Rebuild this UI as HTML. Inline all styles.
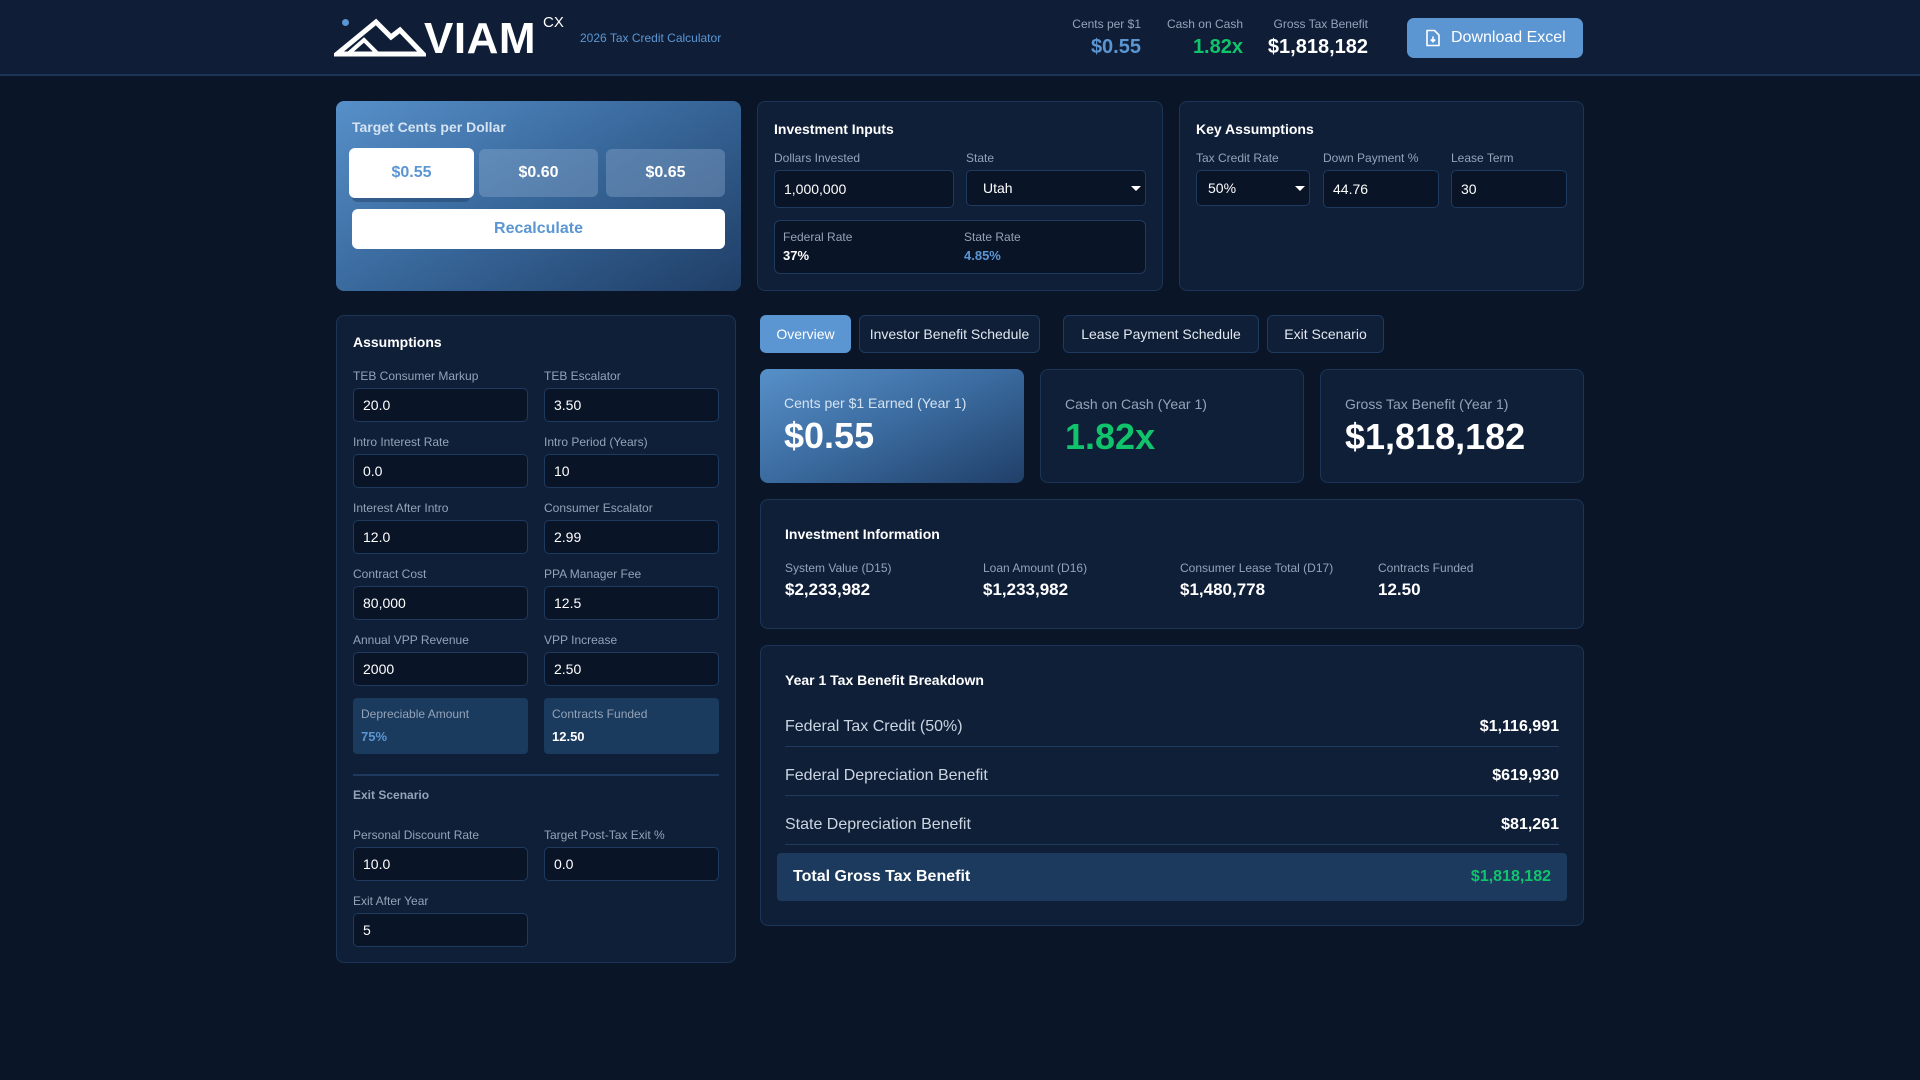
<!DOCTYPE html>
<html><head><meta charset="utf-8"><style>
*{box-sizing:border-box;margin:0;padding:0}
body{width:1920px;height:1080px;background:#0a1628;font-family:"Liberation Sans",sans-serif;position:relative;overflow:hidden;color:#fff}
.a{position:absolute}
.hdr{left:0;top:0;width:1920px;height:76px;background:#0f1e36;border-bottom:2px solid #1b3558}
.card{position:absolute;background:#0f1f38;border:1.5px solid #1c3557;border-radius:8px}
.lbl{position:absolute;font-size:12px;color:#94a3b8;white-space:nowrap}
.inp{position:absolute;background:#0a1427;border:1.5px solid #1e3a5f;border-radius:5px;font-size:14px;color:#fff;padding-left:9px;display:flex;align-items:center}
.ttl{position:absolute;font-size:14px;font-weight:bold;color:#fff}
.tab{position:absolute;top:315px;height:38px;border:1.5px solid #1e3a5f;border-radius:6px;background:#0f1f38;color:#e2e8f0;font-size:14px;display:flex;align-items:center;justify-content:center}
.caret{position:absolute;right:4px;top:50%;margin-top:-2px;border-left:5px solid transparent;border-right:5px solid transparent;border-top:5px solid #fff}
.row{position:absolute;left:784px;width:775px;height:49px;padding-top:10px;border-bottom:1.5px solid #1e3a5f;display:flex;justify-content:space-between;align-items:center;font-size:16px;color:#cbd5e1}
.row b{color:#fff;font-size:16px}
</style></head><body>
<div class="a hdr"></div>
<div class="a" style="left:342px;top:19px;width:7px;height:7px;border-radius:50%;background:#5b96d3"></div>
<svg class="a" style="left:334px;top:18px" width="92" height="40" viewBox="0 0 92 40">
<path d="M3 36 L42 4 L57 19 L66 12 L89 36 Z" fill="none" stroke="#fff" stroke-width="5" stroke-linejoin="miter"/>
<path d="M14 36 L30 22 L44 36" fill="none" stroke="#fff" stroke-width="4"/>
</svg>
<div class="a" style="left:424px;top:14px;font-size:44px;font-weight:bold;letter-spacing:0.5px;color:#fff">VIAM</div>
<div class="a" style="left:543px;top:14px;font-size:15px;color:#fff">CX</div>
<div class="a" style="left:580px;top:31px;font-size:12px;color:#5b96d3">2026 Tax Credit Calculator</div>
<div class="a" style="left:1060px;top:17px;width:81px;text-align:right;font-size:12px;color:#94a3b8">Cents per $1</div>
<div class="a" style="left:1060px;top:36px;width:81px;text-align:right;font-size:20px;font-weight:bold;color:#5b96d3">$0.55</div>
<div class="a" style="left:1150px;top:17px;width:93px;text-align:right;font-size:12px;color:#94a3b8">Cash on Cash</div>
<div class="a" style="left:1150px;top:36px;width:93px;text-align:right;font-size:20px;font-weight:bold;color:#10c46b">1.82x</div>
<div class="a" style="left:1250px;top:17px;width:118px;text-align:right;font-size:12px;color:#94a3b8">Gross Tax Benefit</div>
<div class="a" style="left:1250px;top:36px;width:118px;text-align:right;font-size:20px;font-weight:bold;color:#fff">$1,818,182</div>
<div class="a" style="left:1407px;top:18px;width:176px;height:40px;background:#5b96d3;border-radius:7px;display:flex;align-items:center;padding-left:18px;font-size:16px;color:#fff">
<svg width="16" height="18" viewBox="0 0 16 18" style="margin-right:10px"><path d="M2 1.5 H9.5 L14 6 V16.5 H2 Z" fill="none" stroke="#fff" stroke-width="1.6" stroke-linejoin="round"/><path d="M8 7.5 V12.5 M5.8 10.5 L8 12.7 L10.2 10.5" fill="none" stroke="#fff" stroke-width="1.6"/></svg>Download Excel</div>

<div class="a" style="left:336px;top:101px;width:405px;height:190px;border-radius:8px;background:linear-gradient(150deg,#5790c9 0%,#3a6a9e 45%,#1f3e66 100%)"></div>
<div class="a" style="left:352px;top:119px;font-size:14px;font-weight:bold;color:#d5e3f3">Target Cents per Dollar</div>
<div class="a" style="left:352px;top:152px;width:118px;height:50px;border-radius:5px;background:rgba(30,60,100,.45)"></div>
<div class="a" style="left:349px;top:148px;width:125px;height:50px;border-radius:6px;background:#fff;display:flex;align-items:center;justify-content:center;font-size:16px;font-weight:bold;color:#5b96d3">$0.55</div>
<div class="a" style="left:479px;top:149px;width:119px;height:48px;border-radius:6px;background:rgba(140,170,205,.4);display:flex;align-items:center;justify-content:center;font-size:16px;font-weight:bold;color:#fff">$0.60</div>
<div class="a" style="left:606px;top:149px;width:119px;height:48px;border-radius:6px;background:rgba(140,170,205,.4);display:flex;align-items:center;justify-content:center;font-size:16px;font-weight:bold;color:#fff">$0.65</div>
<div class="a" style="left:352px;top:209px;width:373px;height:40px;border-radius:6px;background:#fff;display:flex;align-items:center;justify-content:center;font-size:16px;font-weight:bold;color:#5b96d3">Recalculate</div>

<div class="card" style="left:757px;top:101px;width:406px;height:190px"></div>
<div class="ttl" style="left:774px;top:121px">Investment Inputs</div>
<div class="lbl" style="left:774px;top:151px">Dollars Invested</div>
<div class="lbl" style="left:966px;top:151px">State</div>
<div class="inp" style="left:774px;top:170px;width:180px;height:38px">1,000,000</div>
<div class="inp" style="left:966px;top:170px;width:180px;height:36px;padding-left:16px">Utah<span class="caret"></span></div>
<div class="a" style="left:774px;top:220px;width:372px;height:54px;background:#0a1427;border:1.5px solid #1e3a5f;border-radius:6px"></div>
<div class="lbl" style="left:783px;top:230px">Federal Rate</div>
<div class="a" style="left:783px;top:248px;font-size:13px;font-weight:bold;color:#fff">37%</div>
<div class="lbl" style="left:964px;top:230px">State Rate</div>
<div class="a" style="left:964px;top:248px;font-size:13px;font-weight:bold;color:#5b96d3">4.85%</div>

<div class="card" style="left:1179px;top:101px;width:405px;height:190px"></div>
<div class="ttl" style="left:1196px;top:121px">Key Assumptions</div>
<div class="lbl" style="left:1196px;top:151px">Tax Credit Rate</div>
<div class="lbl" style="left:1323px;top:151px">Down Payment %</div>
<div class="lbl" style="left:1451px;top:151px">Lease Term</div>
<div class="inp" style="left:1196px;top:170px;width:114px;height:36px;padding-left:11px">50%<span class="caret"></span></div>
<div class="inp" style="left:1323px;top:170px;width:116px;height:38px">44.76</div>
<div class="inp" style="left:1451px;top:170px;width:116px;height:38px">30</div>

<div class="card" style="left:336px;top:315px;width:400px;height:648px"></div>
<div class="ttl" style="left:353px;top:334px">Assumptions</div>
<div class="lbl" style="left:353px;top:369px">TEB Consumer Markup</div><div class="lbl" style="left:544px;top:369px">TEB Escalator</div>
<div class="inp" style="left:353px;top:388px;width:175px;height:34px">20.0</div><div class="inp" style="left:544px;top:388px;width:175px;height:34px">3.50</div>
<div class="lbl" style="left:353px;top:435px">Intro Interest Rate</div><div class="lbl" style="left:544px;top:435px">Intro Period (Years)</div>
<div class="inp" style="left:353px;top:454px;width:175px;height:34px">0.0</div><div class="inp" style="left:544px;top:454px;width:175px;height:34px">10</div>
<div class="lbl" style="left:353px;top:501px">Interest After Intro</div><div class="lbl" style="left:544px;top:501px">Consumer Escalator</div>
<div class="inp" style="left:353px;top:520px;width:175px;height:34px">12.0</div><div class="inp" style="left:544px;top:520px;width:175px;height:34px">2.99</div>
<div class="lbl" style="left:353px;top:567px">Contract Cost</div><div class="lbl" style="left:544px;top:567px">PPA Manager Fee</div>
<div class="inp" style="left:353px;top:586px;width:175px;height:34px">80,000</div><div class="inp" style="left:544px;top:586px;width:175px;height:34px">12.5</div>
<div class="lbl" style="left:353px;top:633px">Annual VPP Revenue</div><div class="lbl" style="left:544px;top:633px">VPP Increase</div>
<div class="inp" style="left:353px;top:652px;width:175px;height:34px">2000</div><div class="inp" style="left:544px;top:652px;width:175px;height:34px">2.50</div>
<div class="a" style="left:353px;top:698px;width:175px;height:56px;background:#1a3a5e;border-radius:4px"></div>
<div class="a" style="left:544px;top:698px;width:175px;height:56px;background:#1a3a5e;border-radius:4px"></div>
<div class="lbl" style="left:361px;top:707px">Depreciable Amount</div><div class="lbl" style="left:552px;top:707px">Contracts Funded</div>
<div class="a" style="left:361px;top:729px;font-size:13px;font-weight:bold;color:#5b96d3">75%</div>
<div class="a" style="left:552px;top:729px;font-size:13px;font-weight:bold;color:#fff">12.50</div>
<div class="a" style="left:353px;top:774px;width:366px;height:1.5px;background:#1e3a5f"></div>
<div class="a" style="left:353px;top:788px;font-size:12px;font-weight:bold;color:#94a3b8">Exit Scenario</div>
<div class="lbl" style="left:353px;top:828px">Personal Discount Rate</div><div class="lbl" style="left:544px;top:828px">Target Post-Tax Exit %</div>
<div class="inp" style="left:353px;top:847px;width:175px;height:34px">10.0</div><div class="inp" style="left:544px;top:847px;width:175px;height:34px">0.0</div>
<div class="lbl" style="left:353px;top:894px">Exit After Year</div>
<div class="inp" style="left:353px;top:913px;width:175px;height:34px">5</div>

<div class="tab" style="left:760px;width:91px;background:#5b96d3;border-color:#5b96d3;color:#fff">Overview</div>
<div class="tab" style="left:859px;width:181px">Investor Benefit Schedule</div>
<div class="tab" style="left:1063px;width:196px">Lease Payment Schedule</div>
<div class="tab" style="left:1267px;width:117px">Exit Scenario</div>

<div class="a" style="left:760px;top:369px;width:264px;height:114px;border-radius:8px;background:linear-gradient(155deg,#5790c9 0%,#3a6a9e 50%,#203f68 100%)"></div>
<div class="a" style="left:784px;top:395px;font-size:14px;color:#d5e3f3">Cents per $1 Earned (Year 1)</div>
<div class="a" style="left:784px;top:415px;font-size:36px;font-weight:bold;color:#fff">$0.55</div>
<div class="card" style="left:1040px;top:369px;width:264px;height:114px"></div>
<div class="a" style="left:1065px;top:396px;font-size:14px;color:#94a3b8">Cash on Cash (Year 1)</div>
<div class="a" style="left:1065px;top:416px;font-size:36px;font-weight:bold;color:#10c46b">1.82x</div>
<div class="card" style="left:1320px;top:369px;width:264px;height:114px"></div>
<div class="a" style="left:1345px;top:396px;font-size:14px;color:#94a3b8">Gross Tax Benefit (Year 1)</div>
<div class="a" style="left:1345px;top:416px;font-size:36px;font-weight:bold;color:#fff">$1,818,182</div>

<div class="card" style="left:760px;top:499px;width:824px;height:130px"></div>
<div class="ttl" style="left:785px;top:526px">Investment Information</div>
<div class="lbl" style="left:785px;top:561px">System Value (D15)</div><div class="a" style="left:785px;top:580px;font-size:17px;font-weight:bold">$2,233,982</div>
<div class="lbl" style="left:983px;top:561px">Loan Amount (D16)</div><div class="a" style="left:983px;top:580px;font-size:17px;font-weight:bold">$1,233,982</div>
<div class="lbl" style="left:1180px;top:561px">Consumer Lease Total (D17)</div><div class="a" style="left:1180px;top:580px;font-size:17px;font-weight:bold">$1,480,778</div>
<div class="lbl" style="left:1378px;top:561px">Contracts Funded</div><div class="a" style="left:1378px;top:580px;font-size:17px;font-weight:bold">12.50</div>

<div class="card" style="left:760px;top:645px;width:824px;height:281px"></div>
<div class="ttl" style="left:785px;top:672px">Year 1 Tax Benefit Breakdown</div>
<div class="row" style="left:785px;width:774px;top:698px"><span>Federal Tax Credit (50%)</span><b>$1,116,991</b></div>
<div class="row" style="left:785px;width:774px;top:747px"><span>Federal Depreciation Benefit</span><b>$619,930</b></div>
<div class="row" style="left:785px;width:774px;top:796px"><span>State Depreciation Benefit</span><b>$81,261</b></div>
<div class="a" style="left:777px;top:853px;width:790px;height:48px;background:#1b3a5d;border-radius:4px;display:flex;justify-content:space-between;align-items:center;padding:0 16px;font-size:16px;font-weight:bold"><span>Total Gross Tax Benefit</span><span style="color:#10c46b">$1,818,182</span></div>
</body></html>
